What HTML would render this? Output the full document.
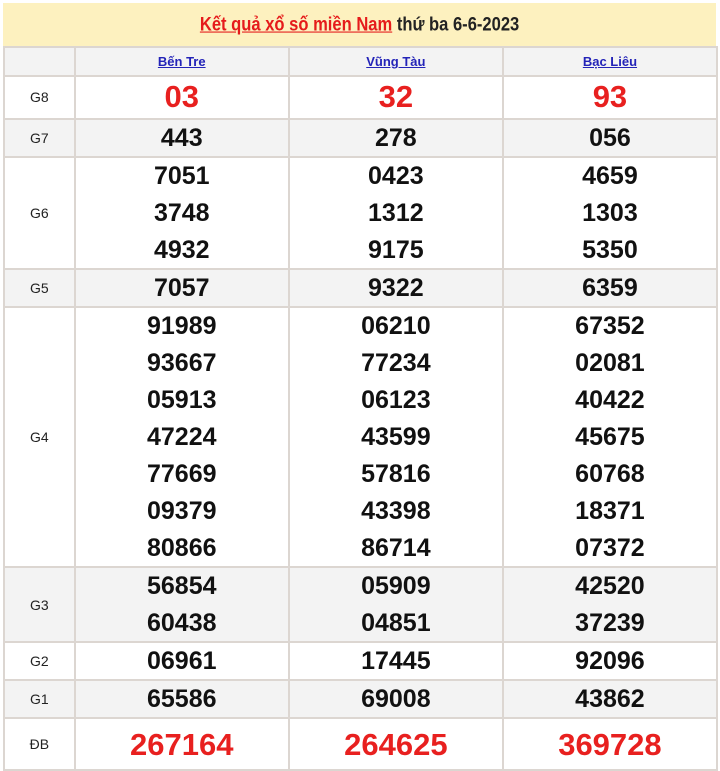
<!DOCTYPE html>
<html><head><meta charset="utf-8"><style>
body{margin:0;width:720px;height:762px;background:#fff;position:relative;overflow:hidden;font-family:"Liberation Sans",sans-serif}
.title{position:absolute;left:3px;top:3px;width:713px;height:43px;background:#fdf1bf;text-align:center;line-height:43px;font-size:18px;font-weight:bold;color:#222}
.title span{display:inline-block;transform:scale(.92,1.08)}
.title a{color:#e51b1b;text-decoration:underline}
.row{position:absolute;left:3px;width:711px;border:2px solid #dcd6d1;border-top:0;display:flex}
.row.g{background:#f3f3f3}
.c{display:flex;flex-direction:column;justify-content:center;align-items:center;border-right:2px solid #dcd6d1;box-sizing:border-box}
.c:last-child{border-right:0}
.l{width:71px;font-size:14px;color:#222}
.v{width:215px;font-weight:bold;font-size:25px;color:#111;line-height:37px}
.v3{width:213px}
.r{color:#e8201f;font-size:31px}
.h a{color:#2323b8;font-size:13px;text-decoration:underline}
</style></head><body>
<div class="title"><span><a>Kết quả xổ số miền Nam</a> thứ ba 6-6-2023</span></div>
<div class="row g" style="top:46px;height:27px;border-top:2px solid #dcd6d1"><div class="c l"></div><div class="c v h"><a>Bến Tre</a></div><div class="c v h"><a>Vũng Tàu</a></div><div class="c v v3 h"><a>Bạc Liêu</a></div></div>
<div class="row" style="top:75px;height:43px"><div class="c l">G8</div><div class="c v r">03</div><div class="c v r">32</div><div class="c v v3 r">93</div></div>
<div class="row g" style="top:120px;height:36px"><div class="c l">G7</div><div class="c v">443</div><div class="c v">278</div><div class="c v v3">056</div></div>
<div class="row" style="top:158px;height:110px"><div class="c l">G6</div><div class="c v"><div>7051</div><div>3748</div><div>4932</div></div><div class="c v"><div>0423</div><div>1312</div><div>9175</div></div><div class="c v v3"><div>4659</div><div>1303</div><div>5350</div></div></div>
<div class="row g" style="top:270px;height:36px"><div class="c l">G5</div><div class="c v">7057</div><div class="c v">9322</div><div class="c v v3">6359</div></div>
<div class="row" style="top:308px;height:258px"><div class="c l">G4</div><div class="c v"><div>91989</div><div>93667</div><div>05913</div><div>47224</div><div>77669</div><div>09379</div><div>80866</div></div><div class="c v"><div>06210</div><div>77234</div><div>06123</div><div>43599</div><div>57816</div><div>43398</div><div>86714</div></div><div class="c v v3"><div>67352</div><div>02081</div><div>40422</div><div>45675</div><div>60768</div><div>18371</div><div>07372</div></div></div>
<div class="row g" style="top:568px;height:73px"><div class="c l">G3</div><div class="c v"><div>56854</div><div>60438</div></div><div class="c v"><div>05909</div><div>04851</div></div><div class="c v v3"><div>42520</div><div>37239</div></div></div>
<div class="row" style="top:643px;height:36px"><div class="c l">G2</div><div class="c v">06961</div><div class="c v">17445</div><div class="c v v3">92096</div></div>
<div class="row g" style="top:681px;height:36px"><div class="c l">G1</div><div class="c v">65586</div><div class="c v">69008</div><div class="c v v3">43862</div></div>
<div class="row" style="top:719px;height:50px"><div class="c l">ĐB</div><div class="c v r">267164</div><div class="c v r">264625</div><div class="c v v3 r">369728</div></div>
</body></html>
